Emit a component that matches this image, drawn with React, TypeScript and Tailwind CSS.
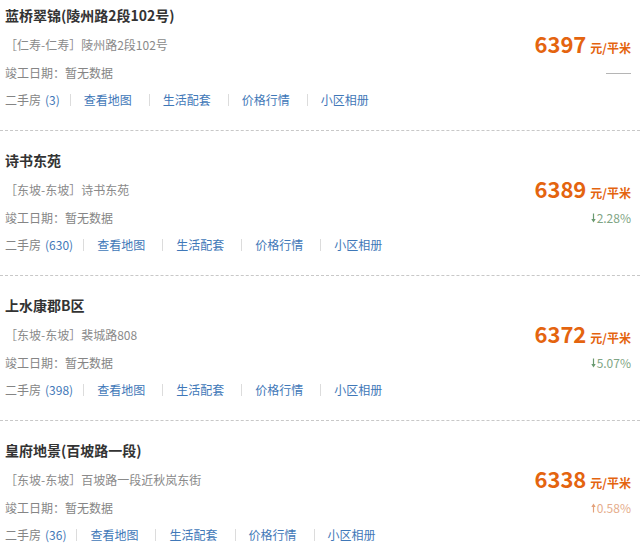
import React from "react";

type Item = {
  title: string;
  area: string;
  addr: string;
  count: string;
  price: string;
  change: { dir: "none" | "down" | "up"; text: string };
};

const items: Item[] = [
  { title: "蓝桥翠锦(陵州路2段102号)", area: "仁寿-仁寿", addr: "陵州路2段102号", count: "3", price: "6397", change: { dir: "none", text: "" } },
  { title: "诗书东苑", area: "东坡-东坡", addr: "诗书东苑", count: "630", price: "6389", change: { dir: "down", text: "2.28%" } },
  { title: "上水康郡B区", area: "东坡-东坡", addr: "裴城路808", count: "398", price: "6372", change: { dir: "down", text: "5.07%" } },
  { title: "皇府地景(百坡路一段)", area: "东坡-东坡", addr: "百坡路一段近秋岚东街", count: "36", price: "6338", change: { dir: "up", text: "0.58%" } },
];

const font = { fontFamily: '"Noto Sans CJK SC", "Noto Sans", sans-serif' };

function Sep({ first }: { first?: boolean }) {
  return <span className={`inline-block w-px h-[12px] bg-[#dcdcdc] ${first ? "ml-[10px]" : "ml-[17px]"} mr-[13px]`} />;
}

function Arrow({ up, color }: { up?: boolean; color: string }) {
  return (
    <svg width="5" height="10" viewBox="0 0 5 10" className="mr-[1px]" style={{ transform: up ? "rotate(180deg)" : undefined }}>
      <line x1="2.5" y1="0.5" x2="2.5" y2="8" stroke={color} strokeWidth="1.2" />
      <path d="M0.3 6 L2.5 9.6 L4.7 6 Z" fill={color} />
    </svg>
  );
}

function Block({ item, first }: { item: Item; first?: boolean }) {
  return (
    <div className={`flex justify-between ${first ? "pt-[5px]" : "pt-[19px]"} pb-[20px] border-b border-dashed border-[#c8c8c8]`}>
      <div className="flex flex-col pl-[5px]">
        <div className="h-[20px] leading-[20px] text-[14px] font-bold text-[#333]">{item.title}</div>
        <div className="mt-[10px] h-[20px] leading-[20px] text-[12px] text-[#8a8a8a]">
          ［{item.area}］{item.addr}
        </div>
        <div className="mt-[8px] h-[20px] leading-[20px] text-[12px] text-[#858585]">竣工日期：暂无数据</div>
        <div className="mt-[7px] h-[20px] leading-[20px] text-[12px] flex items-center">
          <span className="text-[#858585]">二手房</span>
          <span className="ml-[4px] text-[#3f78b8]">({item.count})</span>
          <Sep first />
          <span className="text-[#3f78b8]">查看地图</span>
          <Sep />
          <span className="text-[#3f78b8]">生活配套</span>
          <Sep />
          <span className="text-[#3f78b8]">价格行情</span>
          <Sep />
          <span className="text-[#3f78b8]">小区相册</span>
        </div>
      </div>
      <div className="flex flex-col items-end pr-[9px] pt-[24px]">
        <div className="h-[28px] flex items-baseline text-[#e4640f] font-bold">
          <span className="text-[22px] leading-[28px]">{item.price}</span>
          <span className="ml-[4px] text-[12px]">元/平米</span>
        </div>
        <div className="mt-[6px] h-[20px] leading-[20px] text-[12px] flex items-center">
          {item.change.dir === "none" && <span className="inline-block w-[25px] h-px bg-[#b5b5b5]" />}
          {item.change.dir === "down" && (
            <>
              <Arrow color="#6a9a70" />
              <span className="text-[#7fa585]">{item.change.text}</span>
            </>
          )}
          {item.change.dir === "up" && (
            <>
              <Arrow up color="#e3a27c" />
              <span className="text-[#e6ad8c]">{item.change.text}</span>
            </>
          )}
        </div>
      </div>
    </div>
  );
}

export default function App() {
  return (
    <div className="w-[640px] h-[553px] overflow-hidden bg-white" style={font}>
      {items.map((it, i) => (
        <Block key={i} item={it} first={i === 0} />
      ))}
    </div>
  );
}
